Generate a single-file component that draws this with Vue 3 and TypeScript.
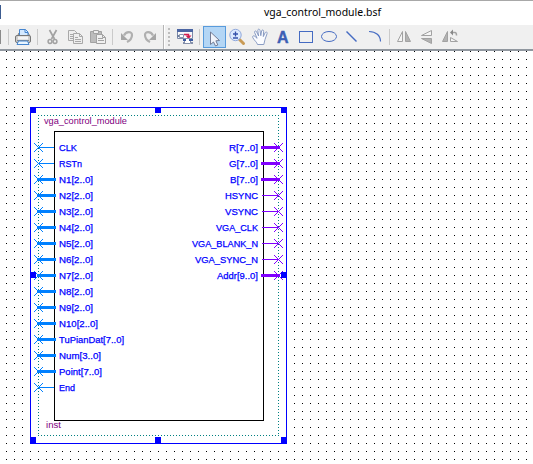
<script setup lang="ts">
interface Tool {
  id: string
  start: number
  width: number
}

interface Pin {
  name: string
  bus: boolean
  length: number
}

const starts: [string, number][] = [
  ['edge', 0], ['sep', 3], ['print', 13], ['sep', 33], ['cut', 42], ['copy', 64],
  ['paste', 87], ['sep', 109], ['undo', 116], ['redo', 138], ['grip', 161],
  ['block', 174], ['sep', 196], ['select', 203], ['zoom', 227], ['hand', 249],
  ['text', 272], ['rect', 295], ['ellipse', 318], ['line', 341], ['arc', 364],
  ['sep', 386], ['mirror', 394], ['flip', 416], ['rotate', 439],
]

const tools: Tool[] = starts.map(([id, start], i) => ({
  id,
  start,
  width: (i + 1 < starts.length ? starts[i + 1][1] : 462) - start,
}))

const inputs: Pin[] = [
  { name: 'CLK', bus: false, length: 18 },
  { name: 'RSTn', bus: false, length: 23 },
  ...[1, 2, 3, 4, 5, 6, 7, 8, 9].map((n) => ({ name: `N${n}[2..0]`, bus: true, length: 34 })),
  { name: 'N10[2..0]', bus: true, length: 39 },
  { name: 'TuPianDat[7..0]', bus: true, length: 65 },
  { name: 'Num[3..0]', bus: true, length: 42 },
  { name: 'Point[7..0]', bus: true, length: 43 },
  { name: 'End', bus: false, length: 16 },
]

const outputs: Pin[] = [
  { name: 'R[7..0]', bus: true, length: 29 },
  { name: 'G[7..0]', bus: true, length: 29 },
  { name: 'B[7..0]', bus: true, length: 28 },
  { name: 'HSYNC', bus: false, length: 33 },
  { name: 'VSYNC', bus: false, length: 33 },
  { name: 'VGA_CLK', bus: false, length: 42 },
  { name: 'VGA_BLANK_N', bus: false, length: 66 },
  { name: 'VGA_SYNC_N', bus: false, length: 63 },
  { name: 'Addr[9..0]', bus: true, length: 41 },
]

const pinY = (i: number): number => 96 + i * 16

const handles: [number, number][] = [
  [30, 56], [155, 56], [281, 56],
  [30, 221], [281, 221],
  [30, 386], [155, 386], [281, 386],
]
</script>

<template>
  <div class="window">
    <header class="titlebar">
      <span class="tab-edge"></span>
      <svg class="title" width="140" height="24">
        <text x="4" y="15" textLength="117" lengthAdjust="spacingAndGlyphs">vga_control_module.bsf</text>
      </svg>
    </header>

    <nav class="toolbar">
      <svg
        v-for="(t, i) in tools"
        :key="i"
        class="tool"
        :width="t.width"
        height="24"
        :viewBox="`${t.start} 0 ${t.width} 24`"
      >
        <rect v-if="t.id === 'edge'" x="0" y="5" width="1" height="14" fill="#8b8b8b" />
        <rect v-else-if="t.id === 'sep'" :x="t.start + (t.start === 33 ? 4 : t.start === 3 ? 5 : 3)" y="4" width="1" height="16" fill="#cacaca" />

        <g v-else-if="t.id === 'print'">
          <path d="M17.500 11 19 8h9l2 3" fill="#ddd" stroke="#777" />
          <path d="M19.500 12V4.500h6l2.500 2.500v5z" fill="#d4e9ff" stroke="#4585cf" />
          <path d="M25 4.500V7.500h3" fill="none" stroke="#4585cf" />
          <rect x="15.500" y="10.500" width="15" height="7" rx="1.500" fill="#cdcdcd" stroke="#777" />
          <path d="M18 11.500h10v3H18z" fill="#f4f4f4" />
          <path d="M17 15.500h12" stroke="#888" />
          <path d="M18.500 16h9l1.500 3.500h-12z" fill="#e9f5ff" stroke="#4585cf" />
        </g>

        <g v-else-if="t.id === 'cut'" fill="none" stroke="#a2a2a2">
          <path d="m49.500 5 5 9M56.500 5l-5 9" stroke-width="1.700" />
          <circle cx="50" cy="16.500" r="1.900" stroke-width="1.500" />
          <circle cx="55" cy="16.500" r="1.900" stroke-width="1.500" />
        </g>

        <g v-else-if="t.id === 'copy'" fill="#eee" stroke="#a8a8a8">
          <path d="M68.500 5.500h6l3 3v7h-9zM70 9.500h5M70 11.500h5M70 13.500h4" />
          <path d="M73.500 8.500h6l3 3v7h-9zM79.500 8.500v3h3M75 12.500h3M75 14.500h6M75 16.500h6" />
        </g>

        <g v-else-if="t.id === 'paste'" stroke="#a2a2a2">
          <path d="M90.500 6.500h11v11h-11z" fill="#bcbcbc" />
          <path d="M93.500 5.500h5v3h-5z" fill="#eee" />
          <path d="M96.500 9.500h6l3 3v6h-9zM102.500 9.500v3h3M98 13.500h5M98 15.500h6" fill="#f0f0f0" />
        </g>

        <g v-else-if="t.id === 'undo'">
          <path d="M124 10.500c2-4.500 8-4.500 8-.5 0 3-2 5.500-5 7" fill="none" stroke="#b0b0b0" stroke-width="2.200" />
          <path d="M121 8v7h7z" fill="#a6a6a6" />
        </g>
        <g v-else-if="t.id === 'redo'">
          <path d="M153 10.500c-2-4.500-8-4.500-8-.5 0 3 2 5.500 5 7" fill="none" stroke="#b0b0b0" stroke-width="2.200" />
          <path d="M156 8v7h-7z" fill="#a6a6a6" />
        </g>

        <g v-else-if="t.id === 'grip'">
          <rect x="163" y="0" width="1" height="24" fill="#b5b5b5" />
          <rect x="164" y="0" width="1" height="24" fill="#fff" />
          <template v-for="n in 5" :key="n">
            <rect x="168" :y="n * 4 - 1" width="2" height="2" fill="#bdbdbd" />
          </template>
        </g>

        <g v-else-if="t.id === 'block'">
          <path d="M177.500 4.500h15v9h-15z" fill="#f8f8fb" stroke="#7c8aa8" />
          <path d="M177 4h16v3h-16z" fill="#4b65a3" />
          <path d="M179.500 9.500h4v3h-4z" fill="#fff" stroke="#8995ad" />
          <path d="M177 10h2v2h-2z" fill="#7080a0" />
          <path d="M184 9.500h4.500v3" fill="none" stroke="#d21f50" stroke-width="1.500" />
          <path d="m185.500 10.500 3 3.500 3-3.500z" fill="#d21f50" />
          <path d="M184.500 13.500h6v5h-6z" fill="#fff" stroke="#8590aa" />
          <path d="M183 14h3v2h-3zM189 14h4v2h-4z" fill="#3959a0" />
          <path d="M183 17h2v2h-2zM191 17h2v2h-2z" fill="#8590aa" />
        </g>

        <g v-else-if="t.id === 'select'">
          <rect x="203.500" y="1.500" width="22" height="21" fill="#b4d6f5" stroke="#589bdc" />
          <path d="M210.500 7v12.500l3-2.500 2 4 2.300-1-1.900-4.200 3.600-.3z" fill="#f1f4fb" stroke="#737b94" />
        </g>

        <g v-else-if="t.id === 'zoom'">
          <path d="m239.500 14.500 4 4" stroke="#c99b56" stroke-width="3" stroke-linecap="round" />
          <circle cx="235.500" cy="10" r="5.700" fill="#dceaff" stroke="#8fa8dc" />
          <path d="M233 9h5M235.500 6.500v5M233 13h5" stroke="#3451ab" stroke-width="1.300" />
        </g>

        <path
          v-else-if="t.id === 'hand'"
          d="M257.500 19.500c-.6-2.400-3.200-4-4.700-6.800-.8-1.800 1-2.600 2.300-1.200l2 1.800-2.500-5.800c-.5-1.600 1.400-2.200 2-.7l2 4.200-.8-5.500c-.1-1.800 2-1.800 2.200 0l.8 5.200.8-4.700c.3-1.600 2.200-1.200 2 .4l-.3 5.200 1.800-3.800c.8-1.600 2.500-.7 1.900 1l-2 5.700-1.200 5z"
          fill="#fbfcff" stroke="#7f93bd" stroke-width=".9"
        />

        <text v-else-if="t.id === 'text'" class="letter" x="277" y="18">A</text>
        <rect v-else-if="t.id === 'rect'" x="299.500" y="6.500" width="13" height="11" fill="none" stroke="#456bc2" />
        <ellipse v-else-if="t.id === 'ellipse'" cx="329" cy="11.500" rx="7.500" ry="5" fill="none" stroke="#456bc2" />
        <path v-else-if="t.id === 'line'" d="m346.500 6.500 10 10" stroke="#456bc2" stroke-width="1.400" />
        <path v-else-if="t.id === 'arc'" d="M369 6.500c7 0 11.500 4 11.500 10" fill="none" stroke="#456bc2" stroke-width="1.200" />

        <g v-else-if="t.id === 'mirror'" stroke="#a2a2a2">
          <path d="M402.500 6.500v10h-5z" fill="#f5f5f5" />
          <path d="M405.500 6.500v10h5z" fill="#b3b3b3" />
        </g>
        <g v-else-if="t.id === 'flip'" stroke="#a2a2a2">
          <path d="M431.500 5.500v5h-10z" fill="#f5f5f5" />
          <path d="M431.500 18.500v-5h-10z" fill="#b3b3b3" />
        </g>
        <g v-else-if="t.id === 'rotate'" stroke="#a2a2a2">
          <path d="M447.500 6.500v10h-5z" fill="#b3b3b3" />
          <path d="M450.500 12.500v4h7z" fill="#f5f5f5" />
          <path d="M452 7.500h3q1.500 0 1.500 3" fill="none" stroke-width="1.500" />
          <path d="m450 7.500 3-3v6z" fill="#888" stroke="none" />
        </g>
      </svg>
    </nav>

    <main class="canvas">
      <svg class="sheet" width="533" height="413">
        <defs>
          <pattern id="grid" x="6" y="0" width="8" height="8" patternUnits="userSpaceOnUse">
            <rect width="1" height="1" fill="#000" />
          </pattern>
        </defs>
        <rect width="533" height="413" fill="url(#grid)" />
        <g shape-rendering="crispEdges" fill="none">
          <rect x="30.500" y="56.500" width="256" height="336" fill="#fff" stroke="#0000ff" />
          <path d="M38 64.500h241M38 384.500h241M38.500 64v321M278.500 64v321" stroke="#008080" stroke-dasharray="1 2" />
          <rect x="54.500" y="80.500" width="209" height="289" stroke="#000" />
        </g>

        <g v-for="(p, i) in inputs" :key="p.name">
          <g shape-rendering="crispEdges" stroke="#0080ff">
            <path :d="`M${p.bus ? 37 : 38} ${pinY(i) + 0.5}H${p.bus ? 56 : 54}`" :stroke-width="p.bus ? 3 : 1" />
            <path :d="`M34 ${pinY(i) - 4}l9 9M43 ${pinY(i) - 4}l-9 9`" />
          </g>
          <text class="label" x="59" :y="pinY(i) + 4" :textLength="p.length" lengthAdjust="spacingAndGlyphs">{{ p.name }}</text>
        </g>

        <g v-for="(p, i) in outputs" :key="p.name">
          <g shape-rendering="crispEdges" stroke="#8000ff">
            <path :d="`M${p.bus ? 261 : 262} ${pinY(i) + 0.5}H${p.bus ? 280 : 278}`" :stroke-width="p.bus ? 3 : 1" />
            <path :d="`M274 ${pinY(i) - 4}l9 9M283 ${pinY(i) - 4}l-9 9`" />
          </g>
          <text class="label" :x="258 - p.length" :y="pinY(i) + 4" :textLength="p.length" lengthAdjust="spacingAndGlyphs">{{ p.name }}</text>
        </g>

        <text class="label name" x="44" y="73" textLength="83" lengthAdjust="spacingAndGlyphs">vga_control_module</text>
        <text class="label name" x="46" y="377" textLength="15" lengthAdjust="spacingAndGlyphs">inst</text>
        <rect v-for="([x, y], i) in handles" :key="i" :x="x" :y="y" width="6" height="6" fill="#0000ff" />
      </svg>
    </main>
  </div>
</template>

<style>
body {
  margin: 0;
  overflow: hidden;
}
</style>

<style scoped>
.window {
  display: flex;
  flex-direction: column;
  width: 533px;
  height: 464px;
  overflow: hidden;
  background: #fff;
}

.titlebar {
  box-sizing: border-box;
  display: flex;
  justify-content: space-between;
  height: 25px;
  padding-right: 133px;
  border-top: 1px solid #a8a8a8;
}

.tab-edge {
  width: 1px;
  height: 14px;
  margin-top: 4px;
  background: #3c5c90;
}

.title {
  font: 11.5px "Noto Sans", "Open Sans", sans-serif;
  fill: #000;
}

.toolbar {
  box-sizing: border-box;
  display: flex;
  height: 26px;
  background: #f0f0f0;
  border-bottom: 2px solid #90979f;
}

.tool {
  display: block;
  flex: none;
}

.letter {
  font: bold 16px "Liberation Sans", sans-serif;
  fill: #3d5fb5;
  stroke: #3d5fb5;
  stroke-width: 0.4px;
}

.canvas {
  flex: 1;
}

.sheet {
  display: block;
}

.label {
  font: 9.4px "Liberation Sans", Arial, sans-serif;
  fill: #0000ff;
  stroke: #0000ff;
  stroke-width: 0.25px;
}

.name {
  fill: #800080;
  stroke: none;
}
</style>
